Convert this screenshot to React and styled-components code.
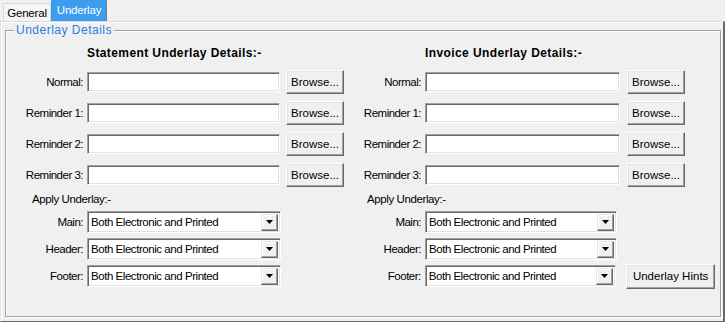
import React from "react";
import styled, { createGlobalStyle } from "styled-components";

const GlobalStyle = createGlobalStyle`
  body {
    margin: 0;
    background: #f0f0f0;
    font-family: "Liberation Sans", Tahoma, Arial, sans-serif;
    font-size: 11px;
    color: #000;
  }
`;

//Styled-components
const Window = styled.div`
  width: 725px;
  height: 322px;
  display: flex;
  flex-direction: column;
  background: #f0f0f0;
  overflow: hidden;
`;

const TabStrip = styled.div`
  display: flex;
  align-items: flex-end;
  height: 21px;
  padding-left: 3px;
`;

const Tab = styled.div`
  display: flex;
  align-items: center;
  justify-content: center;
  box-sizing: border-box;
  width: ${(p) => (p.$active ? "56px" : "48px")};
  height: ${(p) => (p.$active ? "21px" : "18px")};
  padding-bottom: ${(p) => (p.$active ? "2px" : "0")};
  font-size: 11.5px;
  letter-spacing: -0.2px;
  color: ${(p) => (p.$active ? "#fff" : "#000")};
  background: ${(p) => (p.$active ? "#3c9cf0" : "#f5f5f5")};
  border: 1px solid ${(p) => (p.$active ? "#3c9cf0" : "#d9d9d9")};
  border-right-color: ${(p) => (p.$active ? "#7a7a7a" : "#d9d9d9")};
  border-bottom: none;
`;

const Panel = styled.div`
  flex: 1;
  display: flex;
  box-sizing: border-box;
  border-top: 1px solid #d9d9d9;
  border-left: 1px solid #e3e3e3;
  border-right: 2px solid #696969;
  border-bottom: 1px solid #696969;
  box-shadow: inset 1px 1px 0 #fff;
  padding: 8px 2px 4px 4px;
`;

const Group = styled.div`
  position: relative;
  flex: 1;
  display: flex;
  border: 1px solid #a0a0a0;
  box-shadow: inset 1px 1px 0 #fff, 1px 1px 0 #fff;
  padding-top: 15px;
`;

const Legend = styled.span`
  position: absolute;
  top: -7px;
  left: 8px;
  padding: 0 2px;
  background: #f0f0f0;
  color: #2a7de1;
  font-size: 12px;
  letter-spacing: 0.5px;
  line-height: 13px;
`;

const Column = styled.div`
  display: flex;
  flex-direction: column;
  width: ${(p) => p.$width}px;
`;

const Heading = styled.div`
  height: 14px;
  line-height: 14px;
  margin-bottom: 10px;
  padding-left: ${(p) => p.$indent}px;
  font-weight: bold;
  font-size: 12px;
  letter-spacing: 0.4px;
`;

const Rows = styled.div`
  display: flex;
  flex-direction: column;
  gap: ${(p) => p.$gap}px;
`;

const Row = styled.div`
  display: flex;
  align-items: center;
  height: ${(p) => p.$height}px;
`;

const Label = styled.div`
  width: ${(p) => p.$width}px;
  margin-right: ${(p) => p.$gap}px;
  text-align: right;
  white-space: nowrap;
  font-size: 11.5px;
  letter-spacing: -0.5px;
`;

const TextBox = styled.input`
  box-sizing: border-box;
  width: ${(p) => p.$width}px;
  height: 20px;
  margin: 0 ${(p) => p.$gap}px 0 0;
  padding: 0 2px;
  background: #fff;
  border: 1px solid;
  border-color: #a0a0a0 #fff #fff #a0a0a0;
  box-shadow: inset 1px 1px 0 #696969, inset -1px -1px 0 #e3e3e3;
  outline: none;
`;

const Button = styled.button`
  box-sizing: border-box;
  width: ${(p) => p.$width}px;
  height: ${(p) => p.$height}px;
  padding: 0;
  font-family: inherit;
  font-size: 11.5px;
  color: #000;
  background: #f0f0f0;
  border: 1px solid;
  border-color: #fff #696969 #696969 #fff;
  box-shadow: inset -1px -1px 0 #a0a0a0, inset 1px 1px 0 #e3e3e3;
`;

const ApplyTitle = styled.div`
  height: 14px;
  line-height: 14px;
  margin: 5px 0 5px ${(p) => p.$indent}px;
  font-size: 11.5px;
  letter-spacing: -0.4px;
`;

const Combo = styled.div`
  box-sizing: border-box;
  display: flex;
  align-items: center;
  width: ${(p) => p.$width}px;
  height: 22px;
  padding: 1px 2px 1px 3px;
  background: #fff;
  border: 1px solid;
  border-color: #a0a0a0 #fff #fff #a0a0a0;
  box-shadow: inset 1px 1px 0 #696969, inset -1px -1px 0 #e3e3e3;
`;

const ComboText = styled.span`
  flex: 1;
  font-size: 11.5px;
  letter-spacing: -0.45px;
  white-space: nowrap;
`;

const DropButton = styled.div`
  box-sizing: border-box;
  display: flex;
  align-items: center;
  justify-content: center;
  width: 17px;
  height: 17px;
  background: #f0f0f0;
  border: 1px solid;
  border-color: #e3e3e3 #696969 #696969 #e3e3e3;
  box-shadow: inset -1px -1px 0 #a0a0a0, inset 1px 1px 0 #fff;
`;

const HintsButton = styled(Button)`
  margin-left: 10px;
`;

const fileRows = ["Normal:", "Reminder 1:", "Reminder 2:", "Reminder 3:"];
const applyRows = ["Main:", "Header:", "Footer:"];

const Arrow = () => (
  <svg width="7" height="4" viewBox="0 0 7 4">
    <path d="M0 0h7L3.5 4z" fill="#000" />
  </svg>
);

const UnderlayColumn = ({ title, cfg, hints }) => (
  <Column $width={cfg.width}>
    <Heading $indent={cfg.labelW + cfg.labelGap}>{title}</Heading>
    <Rows $gap={7}>
      {fileRows.map((label) => (
        <Row key={label} $height={24}>
          <Label $width={cfg.labelW} $gap={cfg.labelGap}>
            {label}
          </Label>
          <TextBox $width={cfg.inputW} $gap={cfg.btnGap} readOnly />
          <Button $width={58} $height={24}>
            Browse...
          </Button>
        </Row>
      ))}
    </Rows>
    <ApplyTitle $indent={cfg.applyIndent}>Apply Underlay:-</ApplyTitle>
    <Rows $gap={5}>
      {applyRows.map((label, i) => (
        <Row key={label} $height={22}>
          <Label $width={cfg.labelW} $gap={cfg.labelGap}>
            {label}
          </Label>
          <Combo $width={cfg.comboW}>
            <ComboText>Both Electronic and Printed</ComboText>
            <DropButton>
              <Arrow />
            </DropButton>
          </Combo>
          {hints && i === applyRows.length - 1 && (
            <HintsButton $width={89} $height={25}>
              Underlay Hints
            </HintsButton>
          )}
        </Row>
      ))}
    </Rows>
  </Column>
);

const leftCfg = {
  width: 339,
  labelW: 77,
  labelGap: 4,
  inputW: 193,
  btnGap: 6,
  comboW: 194,
  applyIndent: 26,
};

const rightCfg = {
  width: 370,
  labelW: 76,
  labelGap: 4,
  inputW: 195,
  btnGap: 7,
  comboW: 192,
  applyIndent: 22,
};

const App = () => {
  return (
    <>
      <GlobalStyle />
      <Window>
        <TabStrip>
          <Tab>General</Tab>
          <Tab $active>Underlay</Tab>
        </TabStrip>
        <Panel>
          <Group>
            <Legend>Underlay Details</Legend>
            <UnderlayColumn title="Statement Underlay Details:-" cfg={leftCfg} />
            <UnderlayColumn title="Invoice Underlay Details:-" cfg={rightCfg} hints />
          </Group>
        </Panel>
      </Window>
    </>
  );
};

export default App;
